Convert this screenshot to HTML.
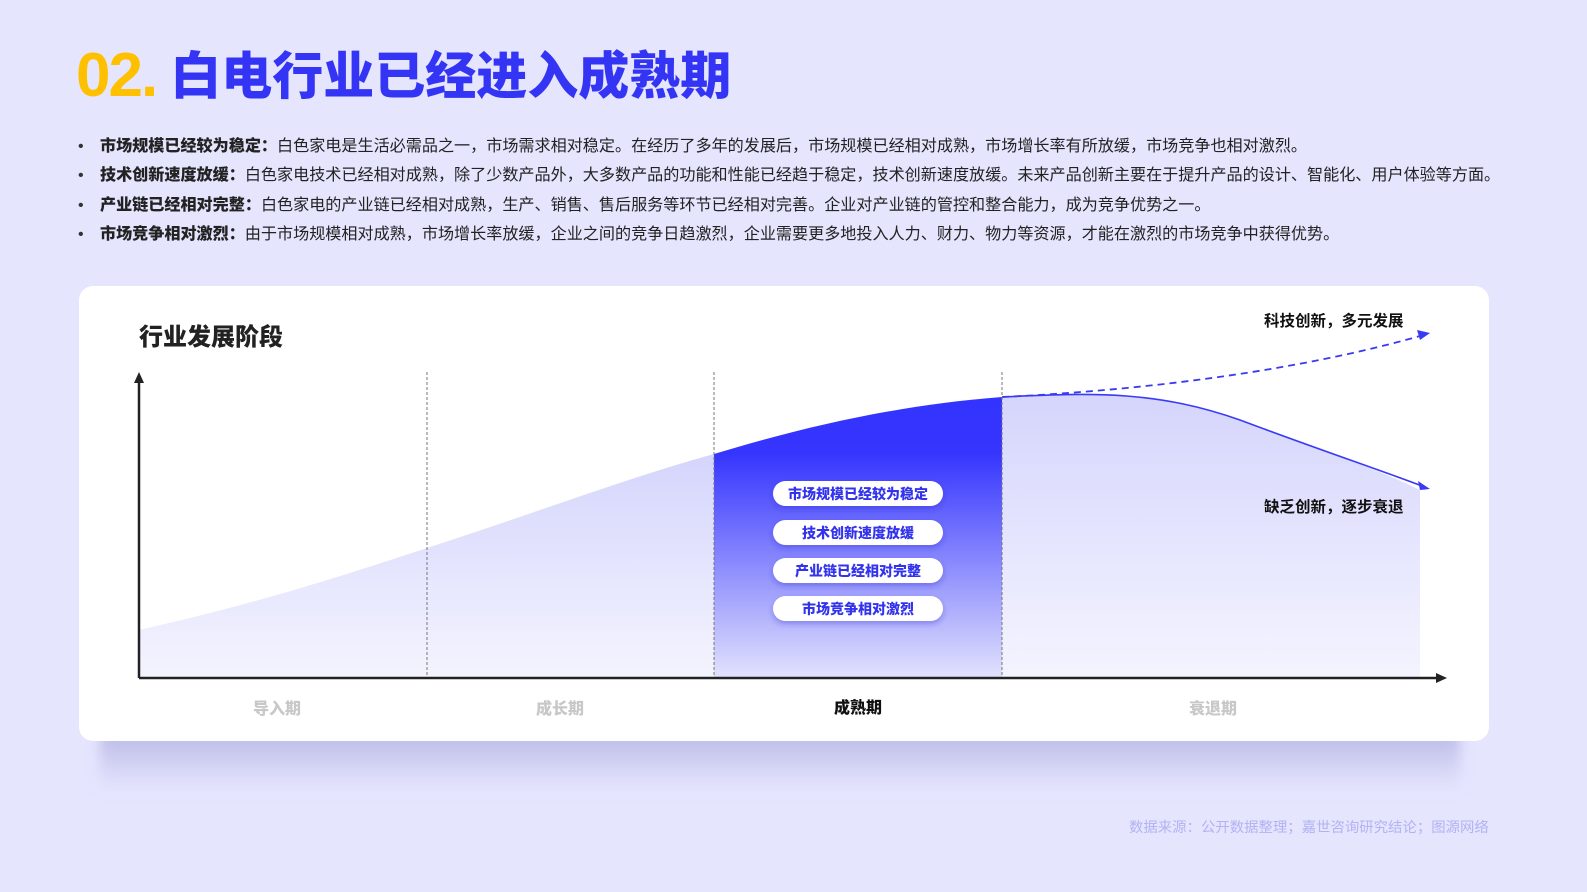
<!DOCTYPE html>
<html><head><meta charset="utf-8"><style>
*{margin:0;padding:0;box-sizing:border-box}
body{width:1587px;height:892px;background:#e5e5fe;position:relative;overflow:hidden;font-family:"Liberation Sans","Noto Sans CJK SC",sans-serif}
.title{position:absolute;left:76px;top:36px;font-size:51px;font-weight:900;color:#3434f5;white-space:nowrap;line-height:80px}
.title span{color:#ffc000;font-size:62px;letter-spacing:-2px;margin-right:14px;vertical-align:-2px}
ul{position:absolute;left:78px;top:132px;list-style:none}
li{font-size:16.1px;line-height:29.3px;color:#222;white-space:nowrap}
li:before{content:"•";display:inline-block;width:22px;color:#333}
li b{font-weight:900}
.shadow{position:absolute;left:100px;top:730px;width:1360px;height:60px;background:linear-gradient(#b9b8e6,#e5e5fe);filter:blur(6px)}
.card{position:absolute;left:79px;top:286px;width:1410px;height:455px;background:#fff;border-radius:14px}
.src{position:absolute;left:1129px;top:816px;font-size:14.4px;color:#b3b2f3;white-space:nowrap}
</style></head><body>
<div class="title"><span>02.</span>白电行业已经进入成熟期</div>
<ul>
<li><b>市场规模已经较为稳定：</b>白色家电是生活必需品之一，市场需求相对稳定。在经历了多年的发展后，市场规模已经相对成熟，市场增长率有所放缓，市场竞争也相对激烈。</li>
<li><b>技术创新速度放缓：</b>白色家电技术已经相对成熟，除了少数产品外，大多数产品的功能和性能已经趋于稳定，技术创新速度放缓。未来产品创新主要在于提升产品的设计、智能化、用户体验等方面。</li>
<li><b>产业链已经相对完整：</b>白色家电的产业链已经相对成熟，生产、销售、售后服务等环节已经相对完善。企业对产业链的管控和整合能力，成为竞争优势之一。</li>
<li><b>市场竞争相对激烈：</b>由于市场规模相对成熟，市场增长率放缓，企业之间的竞争日趋激烈，企业需要更多地投入人力、财力、物力等资源，才能在激烈的市场竞争中获得优势。</li>
</ul>
<div class="shadow"></div>
<div class="card"></div>
<svg style="position:absolute;left:0;top:0" width="1587" height="892">
<defs>
<linearGradient id="lg" x1="0" y1="0" x2="0" y2="1"><stop offset="0" stop-color="#d5d5fd"/><stop offset="1" stop-color="#f4f4fe"/></linearGradient>
<linearGradient id="dg" x1="0" y1="0" x2="0" y2="1"><stop offset="0" stop-color="#3333ff"/><stop offset="0.2" stop-color="#3535fe"/><stop offset="1" stop-color="#e2e2fd"/></linearGradient>
<filter id="sh" x="-20%" y="-50%" width="140%" height="200%"><feDropShadow dx="0" dy="3" stdDeviation="3" flood-color="#2a2ad0" flood-opacity="0.35"/></filter>
</defs>
<path d="M139 630 C250 605 330 580 427 548 C530 515 620 480 714 454 L714 678 L139 678Z" fill="url(#lg)"/>
<path d="M714 454 C810 425 900 405 1002 397 L1002 678 L714 678Z" fill="url(#dg)"/>
<path d="M1002 397 C1100 392 1160 392 1240 420 C1310 445 1380 470 1420 490 L1420 678 L1002 678Z" fill="url(#lg)"/>
<path d="M1002 397 C1100 392 1160 392 1240 420 C1320 450 1380 470 1422 486" fill="none" stroke="#3a3af5" stroke-width="1.6"/>
<path d="M1430 489 L1418 481 L1420 490Z" fill="#3a3af5"/>
<path d="M1002 397 C1150 390 1300 370 1420 336" fill="none" stroke="#3a3af5" stroke-width="1.8" stroke-dasharray="7 5"/>
<path d="M1430 333 L1417 330 L1420 340Z" fill="#3a3af5"/>
<g stroke="#777" stroke-width="1" stroke-dasharray="3 2"><line x1="427" y1="372" x2="427" y2="678"/><line x1="714" y1="372" x2="714" y2="678"/><line x1="1002" y1="372" x2="1002" y2="678"/></g>
<line x1="139" y1="678" x2="139" y2="380" stroke="#222" stroke-width="2.5"/>
<path d="M139 372 L134 383 L144 383Z" fill="#222"/>
<line x1="139" y1="678" x2="1440" y2="678" stroke="#222" stroke-width="2.5"/>
<path d="M1447 678 L1436 673 L1436 683Z" fill="#222"/>
<g filter="url(#sh)" fill="#fff"><rect x="773" y="481" width="170" height="25" rx="12.5"/><rect x="773" y="520" width="170" height="25" rx="12.5"/><rect x="773" y="558" width="170" height="25" rx="12.5"/><rect x="773" y="596" width="170" height="25" rx="12.5"/></g>
<g font-family="Liberation Sans,Noto Sans CJK SC,sans-serif" font-weight="900" font-size="14" fill="#3333ee" text-anchor="middle"><text x="858" y="499">市场规模已经较为稳定</text><text x="858" y="538">技术创新速度放缓</text><text x="858" y="576">产业链已经相对完整</text><text x="858" y="614">市场竞争相对激烈</text></g>
<text x="139" y="345" font-family="Liberation Sans,Noto Sans CJK SC,sans-serif" font-weight="900" font-size="24" fill="#222">行业发展阶段</text>
<g font-family="Liberation Sans,Noto Sans CJK SC,sans-serif" font-weight="700" font-size="15.5" fill="#111"><text x="1264" y="326">科技创新，多元发展</text><text x="1264" y="512">缺乏创新，逐步衰退</text></g>
<g font-family="Liberation Sans,Noto Sans CJK SC,sans-serif" font-weight="900" font-size="16" text-anchor="middle" fill="#c8c8c8"><text x="277" y="714">导入期</text><text x="560" y="714">成长期</text><text x="858" y="713" fill="#111">成熟期</text><text x="1213" y="714">衰退期</text></g>
</svg>
<div class="src">数据来源：公开数据整理；嘉世咨询研究结论；图源网络</div>
</body></html>
